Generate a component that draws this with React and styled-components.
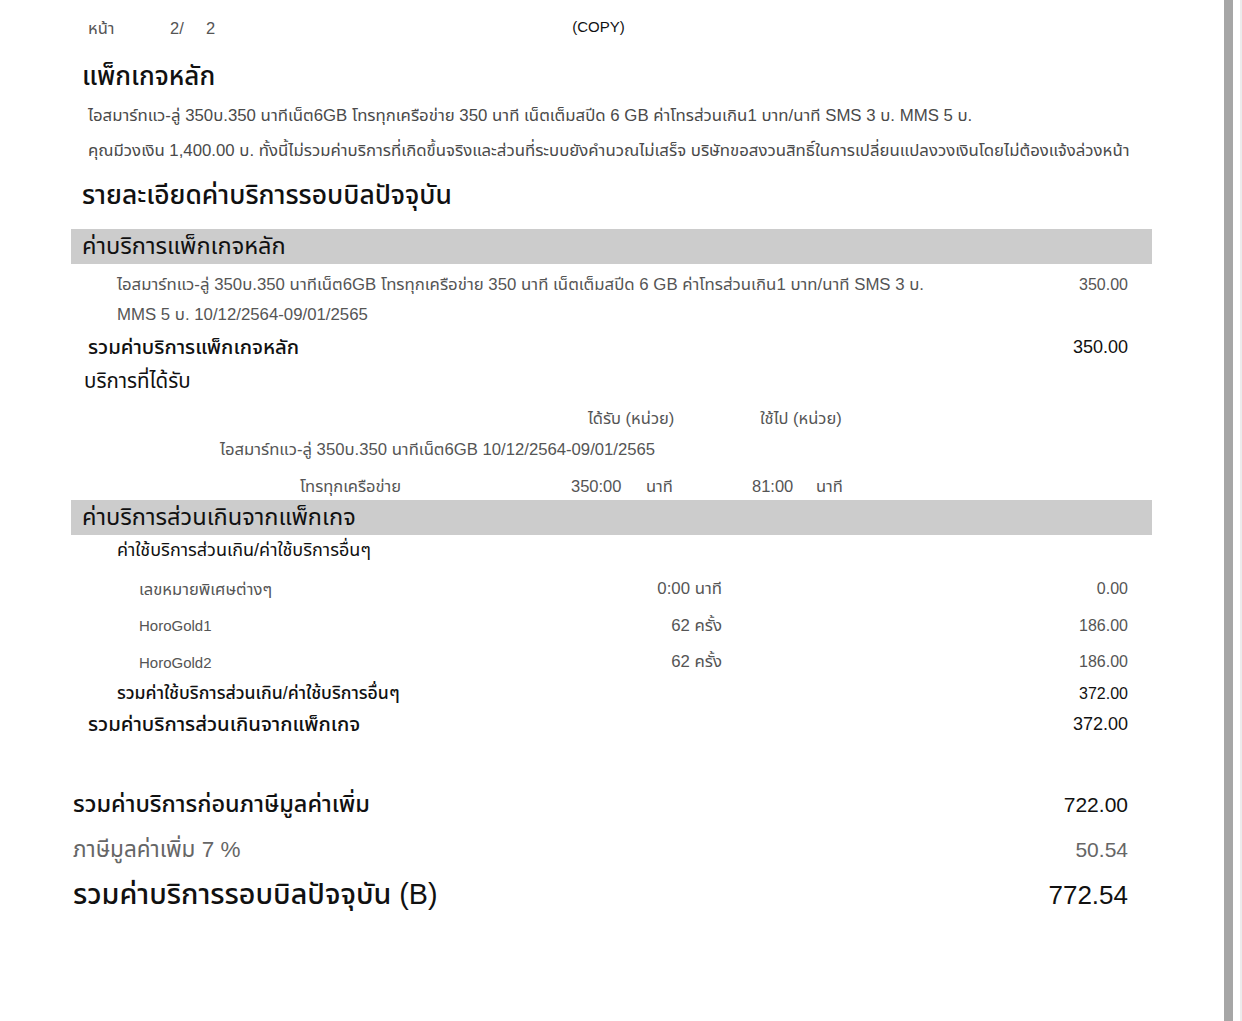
//IMPORTS
import React from 'react'
import styled, { createGlobalStyle } from 'styled-components'

//STYLE
const GlobalStyle = createGlobalStyle`
  html, body {
    margin: 0;
    padding: 0;
    background: #fff;
  }
  body {
    font-family: "Liberation Sans", "Noto Sans Thai", "Loma", "Garuda", "Noto Sans", sans-serif;
    color: #111;
  }
`

const Viewer = styled.div`
  display: flex;
  width: 1242px;
  height: 1021px;
  overflow: hidden;
  background: #fff;
`

const Sheet = styled.div`
  width: 1224px;
  padding-left: 71px;
  box-sizing: border-box;
`

const Content = styled.div`
  width: 1081px;
`

const ScrollTrack = styled.div`
  display: flex;
  width: 18px;
  background: #fff;

  .thumb {
    width: 9px;
    background: #a6a6a6;
  }
  .edge {
    margin-left: auto;
    width: 2px;
    background: #ececec;
  }
`

const TopRow = styled.div`
  display: flex;
  align-items: center;
  height: 56px;
  padding-left: 17px;
  font-size: 16.5px;
  color: #555;

  .page { width: 82px; }
  .num { width: 36px; }
  .copy {
    margin-left: 357px;
    font-size: 15px;
    color: #111;
    padding-bottom: 4px;
  }
`

const Title = styled.div`
  display: flex;
  align-items: center;
  height: ${p => p.$h}px;
  padding-left: 11px;
  font-size: ${p => p.$size}px;
  font-weight: 500;
  color: #111;
`

const Desc = styled.div`
  display: flex;
  align-items: center;
  height: ${p => p.$h}px;
  padding-left: 17px;
  font-size: 16.8px;
  color: #4a4a4a;
  white-space: nowrap;
`

const Band = styled.div`
  display: flex;
  align-items: center;
  height: 35px;
  margin-top: ${p => p.$mt || 0}px;
  padding-left: 11px;
  background: #cccccc;
  font-size: 23.6px;
  color: #111;
`

const ItemRow = styled.div`
  display: grid;
  grid-template-columns: 1fr 140px;
  padding: 6px 24px 0 46px;
  font-size: 16.8px;
  line-height: 30px;
  color: #555;

  .amount {
    text-align: right;
    font-size: 16px;
  }
`

const SumRow = styled.div`
  display: grid;
  grid-template-columns: 1fr 160px;
  align-items: center;
  height: ${p => p.$h}px;
  padding: 0 24px 0 ${p => p.$indent}px;
  font-size: ${p => p.$size}px;
  font-weight: 500;
  color: #111;

  .amount {
    text-align: right;
    font-size: ${p => p.$amount}px;
    font-weight: 400;
  }
`

const SubTitle = styled.div`
  display: flex;
  align-items: center;
  height: ${p => p.$h}px;
  padding-left: ${p => p.$indent}px;
  font-size: ${p => p.$size}px;
  color: #111;
`

const UnitHeader = styled.div`
  display: grid;
  grid-template-columns: 172px auto;
  align-items: center;
  height: 40px;
  padding-left: 517px;
  font-size: 16.5px;
  color: #555;
`

const PackLine = styled.div`
  display: flex;
  align-items: center;
  height: 24px;
  padding-left: 149px;
  font-size: 16.7px;
  color: #555;
`

const UsageRow = styled.div`
  display: grid;
  grid-template-columns: 271px 75px 106px 64px auto;
  align-items: center;
  height: 28px;
  margin-top: 10px;
  padding-left: 229px;
  font-size: 16.5px;
  color: #555;
`

const ChargeRow = styled.div`
  display: grid;
  grid-template-columns: 1fr auto 406px;
  align-items: center;
  height: ${p => p.$h}px;
  margin-top: ${p => p.$mt || 0}px;
  padding: 0 24px 0 68px;
  font-size: 16.8px;
  color: #555;

  .name { font-size: ${p => p.$nameSize}px; }
  .qty { text-align: right; }
  .amount { text-align: right; font-size: 16px; }
`

const Summary = styled.div`
  display: grid;
  grid-template-columns: 1fr 200px;
  align-items: center;
  height: ${p => p.$h}px;
  margin-top: ${p => p.$mt || 0}px;
  padding: 0 24px 0 2px;
  font-size: ${p => p.$size}px;
  color: ${p => p.$color || '#111'};
  font-weight: ${p => p.$weight || 400};

  .amount {
    text-align: right;
    font-size: ${p => p.$amount}px;
    font-weight: 400;
  }
`

const desc1 = 'ไอสมาร์ทแว-ลู่ 350บ.350 นาทีเน็ต6GB โทรทุกเครือข่าย 350 นาที เน็ตเต็มสปีด 6 GB ค่าโทรส่วนเกิน1 บาท/นาที SMS 3 บ. MMS 5 บ.'
const desc2 = 'คุณมีวงเงิน  1,400.00 บ. ทั้งนี้ไม่รวมค่าบริการที่เกิดขึ้นจริงและส่วนที่ระบบยังคำนวณไม่เสร็จ บริษัทขอสงวนสิทธิ์ในการเปลี่ยนแปลงวงเงินโดยไม่ต้องแจ้งล่วงหน้า'

const charges = [
  { name: 'เลขหมายพิเศษต่างๆ', nameSize: 16.6, qty: '0:00 นาที', amount: '0.00', h: 36, mt: 6 },
  { name: 'HoroGold1', nameSize: 15, qty: '62 ครั้ง', amount: '186.00', h: 37 },
  { name: 'HoroGold2', nameSize: 15, qty: '62 ครั้ง', amount: '186.00', h: 36 },
]

//MAIN COMPONENT
const App = () => {
  return (
    <>
      <GlobalStyle />
      <Viewer>
        <Sheet>
          <Content>
            <TopRow>
              <span className="page">หน้า</span>
              <span className="num">2/</span>
              <span>2</span>
              <span className="copy">(COPY)</span>
            </TopRow>

            <Title $h={42} $size={26}>แพ็กเกจหลัก</Title>
            <Desc $h={35}>{desc1}</Desc>
            <Desc $h={36}>{desc2}</Desc>
            <Title $h={54} $size={26.4}>รายละเอียดค่าบริการรอบบิลปัจจุบัน</Title>

            <Band $mt={6}>ค่าบริการแพ็กเกจหลัก</Band>
            <ItemRow>
              <span>
                ไอสมาร์ทแว-ลู่ 350บ.350 นาทีเน็ต6GB โทรทุกเครือข่าย 350 นาที เน็ตเต็มสปีด 6 GB ค่าโทรส่วนเกิน1 บาท/นาที SMS 3 บ.
                <br />
                MMS 5 บ. 10/12/2564-09/01/2565
              </span>
              <span className="amount">350.00</span>
            </ItemRow>
            <SumRow $h={34} $indent={17} $size={20.3} $amount={18}>
              <span>รวมค่าบริการแพ็กเกจหลัก</span>
              <span className="amount">350.00</span>
            </SumRow>
            <SubTitle $h={34} $indent={13} $size={20.5}>บริการที่ได้รับ</SubTitle>

            <UnitHeader>
              <span>ได้รับ (หน่วย)</span>
              <span>ใช้ไป (หน่วย)</span>
            </UnitHeader>
            <PackLine>ไอสมาร์ทแว-ลู่ 350บ.350 นาทีเน็ต6GB 10/12/2564-09/01/2565</PackLine>
            <UsageRow>
              <span>โทรทุกเครือข่าย</span>
              <span>350:00</span>
              <span>นาที</span>
              <span>81:00</span>
              <span>นาที</span>
            </UsageRow>

            <Band>ค่าบริการส่วนเกินจากแพ็กเกจ</Band>
            <SubTitle $h={30} $indent={46} $size={18}>ค่าใช้บริการส่วนเกิน/ค่าใช้บริการอื่นๆ</SubTitle>
            {charges.map(c => (
              <ChargeRow key={c.name} $h={c.h} $mt={c.mt} $nameSize={c.nameSize}>
                <span className="name">{c.name}</span>
                <span className="qty">{c.qty}</span>
                <span className="amount">{c.amount}</span>
              </ChargeRow>
            ))}
            <SumRow $h={24} $indent={46} $size={17.7} $amount={16}>
              <span>รวมค่าใช้บริการส่วนเกิน/ค่าใช้บริการอื่นๆ</span>
              <span className="amount">372.00</span>
            </SumRow>
            <SumRow $h={40} $indent={17} $size={20.3} $amount={18}>
              <span>รวมค่าบริการส่วนเกินจากแพ็กเกจ</span>
              <span className="amount">372.00</span>
            </SumRow>

            <Summary $h={42} $mt={40} $size={23.5} $amount={21} $weight={500}>
              <span>รวมค่าบริการก่อนภาษีมูลค่าเพิ่ม</span>
              <span className="amount">722.00</span>
            </Summary>
            <Summary $h={48} $size={22.5} $amount={21} $color="#666">
              <span>ภาษีมูลค่าเพิ่ม 7 %</span>
              <span className="amount">50.54</span>
            </Summary>
            <Summary $h={40} $size={28.7} $amount={26} $weight={500}>
              <span>รวมค่าบริการรอบบิลปัจจุบัน (B)</span>
              <span className="amount">772.54</span>
            </Summary>
          </Content>
        </Sheet>
        <ScrollTrack>
          <div className="thumb" />
          <div className="edge" />
        </ScrollTrack>
      </Viewer>
    </>
  )
}
export default App
